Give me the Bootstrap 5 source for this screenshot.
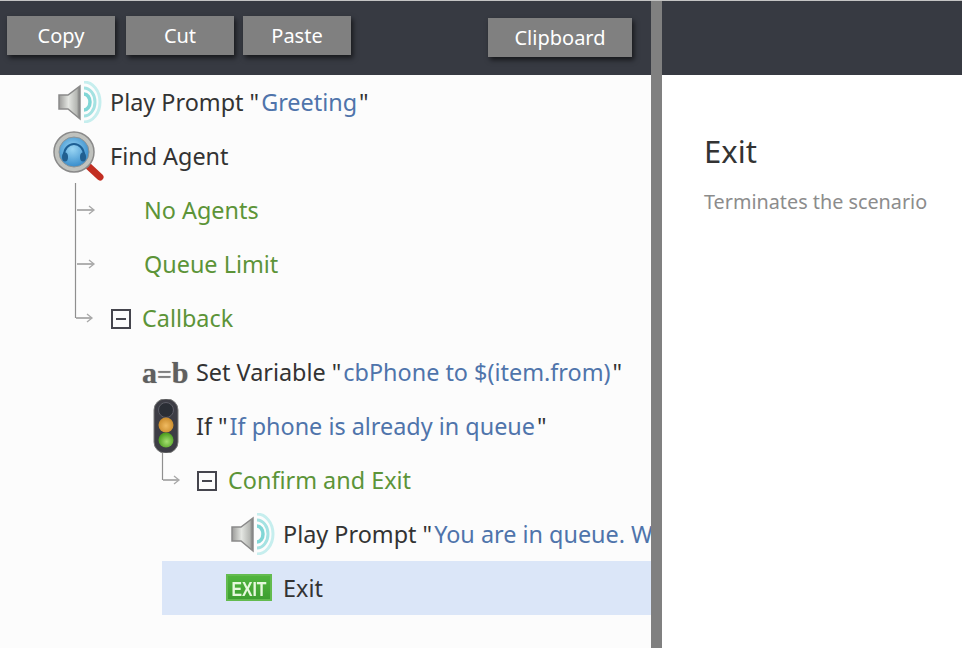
<!DOCTYPE html>
<html lang="en">
<head>
    <meta charset="UTF-8">
    <title>Scenario Editor</title>
    <link href="https://cdn.jsdelivr.net/npm/bootstrap@5.3.0/dist/css/bootstrap.min.css" rel="stylesheet">
    <style>
        html, body {
            height: 100%;
        }
        body {
            background: #fff;
            color: #333;
            font-family: "Noto Sans", sans-serif;
            font-size: 23.4px;
            overflow: hidden;
            border-top: 1px solid #c4c4c4;
        }
        .left-pane { width: 651px; background: #fcfcfc; }
        .splitter { width: 11px; background: #808080; }
        .top-bar { height: 74px; background: #373a42; }
        .left-bar { padding: 15px 0 0 7px; gap: 11px; }
        .tool-btn {
            width: 108px;
            height: 39px;
            padding: 0;
            line-height: 39px;
            background: #808080;
            color: #fff;
            border: 0;
            border-radius: 0;
            font-size: 20px;
            box-shadow: 2px 3px 5px rgba(0, 0, 0, .6);
        }
        .tool-btn:hover { background: #808080; color: #fff; }
        .btn-paste { margin-left: -2px; }
        .btn-clip { width: 144px; margin: 2px 0 0 126px; }
        .tree-row {
            height: 54px;
            white-space: nowrap;
            overflow: hidden;
        }
        .tree-row svg { flex: none; }
        .lbl { padding-top: 2px; }
        .val { color: #4f74ab; margin: 0 2px; }
        .branch { color: #5c9438; }
        .branch-plain { margin-left: 46px; }
        .lv-0 { padding-left: 52px; }
        .lv-1 { padding-left: 74px; }
        .lv-2 { padding-left: 142px; }
        .lv-3 { padding-left: 161px; }
        .lv-3 .collapse-box { margin-left: 12px; }
        .lv-sel { padding-left: 162px; }
        .lv-4 { padding-left: 231px; }
        .ico-box { width: 58px; flex: none; }
        .ico-ab {
            width: 54px;
            flex: none;
            font-family: "Liberation Serif", serif;
            font-weight: 700;
            font-size: 30px;
            color: #5f5f5f;
            text-shadow: 0 0 1px #999;
        }
        .ico-eq { font-size: 26px; color: #808080; }
        .ico-light { width: 43px; margin-left: 11px; flex: none; }
        .ico-speak { width: 52px; flex: none; }
        .ico-exit { width: 57px; margin-left: 64px; flex: none; }
        .collapse-box {
            width: 20px;
            height: 20px;
            border: 2px solid #45454d;
            margin: 2px 11px 0 13px;
            flex: none;
        }
        .collapse-box::after {
            content: "";
            display: block;
            width: 10px;
            height: 2px;
            margin: 7px 3px;
            background: #45454d;
        }
        .row-selected { background: #dbe6f8; }
        .info-pane { padding: 51px 0 0 42px; }
        .info-title { font-size: 31px; font-weight: 400; line-height: 50px; margin: 0; color: #333; }
        .info-text { font-size: 19.800px; line-height: 26px; margin: 13px 0 0; color: #8c8c8c; white-space: nowrap; }
    </style>
</head>
<body>
<svg width="0" height="0" class="position-absolute">
    <defs>
        <linearGradient id="metal" x1="0" y1="0" x2="1" y2="0">
            <stop offset="0" stop-color="#9a9a98"/>
            <stop offset=".45" stop-color="#e4e6e2"/>
            <stop offset=".85" stop-color="#b4b6b2"/>
            <stop offset="1" stop-color="#6e6e6e"/>
        </linearGradient>
        <radialGradient id="lens" cx=".45" cy=".4" r=".65">
            <stop offset="0" stop-color="#9ad6f4"/>
            <stop offset="1" stop-color="#2f86c8"/>
        </radialGradient>
        <radialGradient id="amber" cx=".5" cy=".55" r=".55">
            <stop offset="0" stop-color="#f0bb62"/>
            <stop offset="1" stop-color="#c98a2a"/>
        </radialGradient>
        <radialGradient id="lime" cx=".55" cy=".6" r=".55">
            <stop offset="0" stop-color="#a5e070"/>
            <stop offset="1" stop-color="#4f9e22"/>
        </radialGradient>
        <linearGradient id="exitgrad" x1="0" y1="0" x2="0" y2="1">
            <stop offset="0" stop-color="#52b53f"/>
            <stop offset="1" stop-color="#3c9e2f"/>
        </linearGradient>
        <filter id="soft"><feGaussianBlur stdDeviation=".6"/></filter>
        <filter id="softer"><feGaussianBlur stdDeviation=".3"/></filter>
        <symbol id="speaker" viewBox="0 0 44 42">
            <g filter="url(#soft)">
                <path d="M1 14h9L22 5v33L10 28H1z" fill="url(#metal)" stroke="#8a8a8a" stroke-width="1.500"/>
                <path d="M26 1A16 20 0 0 1 26 41" fill="none" stroke="#c6eeee" stroke-width="3"/>
                <path d="M26 7A11 14 0 0 1 26 35" fill="none" stroke="#a4e2e2" stroke-width="3"/>
                <path d="M26 13A6 8 0 0 1 26 29" fill="none" stroke="#80d6d6" stroke-width="3.500"/>
            </g>
        </symbol>
        <symbol id="conn-mid" viewBox="0 0 24 54">
            <path d="M1.500 0v54" fill="none" stroke="#8f8f8f" stroke-width="1.200"/>
            <path d="M3 27h16" fill="none" stroke="#b0b0b0" stroke-width="2"/>
            <path d="M15 23l5 4-5 4" fill="none" stroke="#a8a8a8" stroke-width="1.300"/>
        </symbol>
        <symbol id="conn-end" viewBox="0 0 24 54">
            <path d="M1.500 0v26.500h2" fill="none" stroke="#8f8f8f" stroke-width="1.200"/>
            <path d="M2 27h15" fill="none" stroke="#b0b0b0" stroke-width="2"/>
            <path d="M13 23l5 4-5 4" fill="none" stroke="#a8a8a8" stroke-width="1.300"/>
        </symbol>
    </defs>
</svg>
<div class="d-flex h-100">
    <div class="left-pane flex-shrink-0 d-flex flex-column">
        <div class="top-bar left-bar d-flex align-items-start">
            <button class="btn tool-btn">Copy</button>
            <button class="btn tool-btn">Cut</button>
            <button class="btn tool-btn btn-paste">Paste</button>
            <button class="btn tool-btn btn-clip">Clipboard</button>
        </div>
        <div class="overflow-hidden">
            <div class="tree-row d-flex align-items-center lv-0">
                <div class="ico-box d-flex justify-content-end pe-2"><svg width="44" height="42"><use href="#speaker"/></svg></div>
                <span class="lbl">Play Prompt "<span class="val">Greeting</span>"</span>
            </div>
            <div class="tree-row d-flex align-items-center lv-0">
                <div class="ico-box">
                    <svg width="52" height="50" viewBox="0 0 52 50">
                        <g filter="url(#soft)">
                            <path d="M34 33l14 13" stroke="#c22f24" stroke-width="7" stroke-linecap="round"/>
                            <circle cx="22" cy="21" r="20" fill="#c0c2be" stroke="#8a8a8a" stroke-width="1.500"/>
                            <circle cx="22" cy="21" r="15" fill="url(#lens)" stroke="#8e9496" stroke-width="1"/>
                            <path d="M12 24a10 11 0 0 1 20 0" fill="none" stroke="#1f5f94" stroke-width="2"/>
                            <ellipse cx="13" cy="26" rx="3" ry="4.500" fill="#205f90"/>
                            <ellipse cx="31" cy="26" rx="3" ry="4.500" fill="#205f90"/>
                        </g>
                    </svg>
                </div>
                <span class="lbl">Find Agent</span>
            </div>
            <div class="tree-row d-flex align-items-center lv-1">
                <svg width="24" height="54"><use href="#conn-mid"/></svg>
                <span class="lbl branch branch-plain">No Agents</span>
            </div>
            <div class="tree-row d-flex align-items-center lv-1">
                <svg width="24" height="54"><use href="#conn-mid"/></svg>
                <span class="lbl branch branch-plain">Queue Limit</span>
            </div>
            <div class="tree-row d-flex align-items-center lv-1">
                <svg width="24" height="54"><use href="#conn-end"/></svg>
                <span class="collapse-box"></span>
                <span class="lbl branch">Callback</span>
            </div>
            <div class="tree-row d-flex align-items-center lv-2">
                <span class="ico-ab">a<span class="ico-eq">=</span>b</span>
                <span class="lbl">Set Variable "<span class="val">cbPhone to $(item.from)</span>"</span>
            </div>
            <div class="tree-row d-flex align-items-center lv-2">
                <div class="ico-light">
                    <svg width="26" height="56" viewBox="0 0 26 56" class="d-block">
                        <g filter="url(#soft)">
                            <rect x="1" y="1" width="24" height="54" rx="11" fill="#3c3e44" stroke="#7a7a7a"/>
                            <circle cx="13" cy="12" r="7.500" fill="#2c2d36" stroke="#5c5d66"/>
                            <circle cx="13" cy="27" r="7.500" fill="url(#amber)"/>
                            <circle cx="13" cy="42" r="7.500" fill="url(#lime)"/>
                        </g>
                    </svg>
                </div>
                <span class="lbl">If "<span class="val">If phone is already in queue</span>"</span>
            </div>
            <div class="tree-row d-flex align-items-center lv-3">
                <svg width="24" height="54"><use href="#conn-end"/></svg>
                <span class="collapse-box"></span>
                <span class="lbl branch">Confirm and Exit</span>
            </div>
            <div class="tree-row d-flex align-items-center lv-4">
                <div class="ico-speak"><svg width="44" height="42"><use href="#speaker"/></svg></div>
                <span class="lbl">Play Prompt "<span class="val">You are in queue. W</span></span>
            </div>
            <div class="tree-row d-flex align-items-center lv-sel">
                <div class="row-selected tree-row d-flex align-items-center flex-grow-1">
                    <div class="ico-exit">
                        <svg width="46" height="28" viewBox="0 0 46 28" class="d-block">
                            <rect x="1" y="1" width="44" height="25" fill="url(#exitgrad)" stroke="#64bb50" stroke-width="2" filter="url(#soft)"/>
                            <text x="23" y="22" text-anchor="middle" font-family="Liberation Sans, sans-serif" font-weight="700" font-size="21" fill="#e6f8dc" textLength="35" lengthAdjust="spacingAndGlyphs" filter="url(#softer)">EXIT</text>
                        </svg>
                    </div>
                    <span class="lbl">Exit</span>
                </div>
            </div>
        </div>
    </div>
    <div class="splitter flex-shrink-0"></div>
    <div class="flex-grow-1">
        <div class="top-bar"></div>
        <div class="info-pane">
            <h1 class="info-title">Exit</h1>
            <p class="info-text">Terminates the scenario</p>
        </div>
    </div>
</div>
<script src="https://cdn.jsdelivr.net/npm/bootstrap@5.3.0/dist/js/bootstrap.bundle.min.js"></script>
</body>
</html>
